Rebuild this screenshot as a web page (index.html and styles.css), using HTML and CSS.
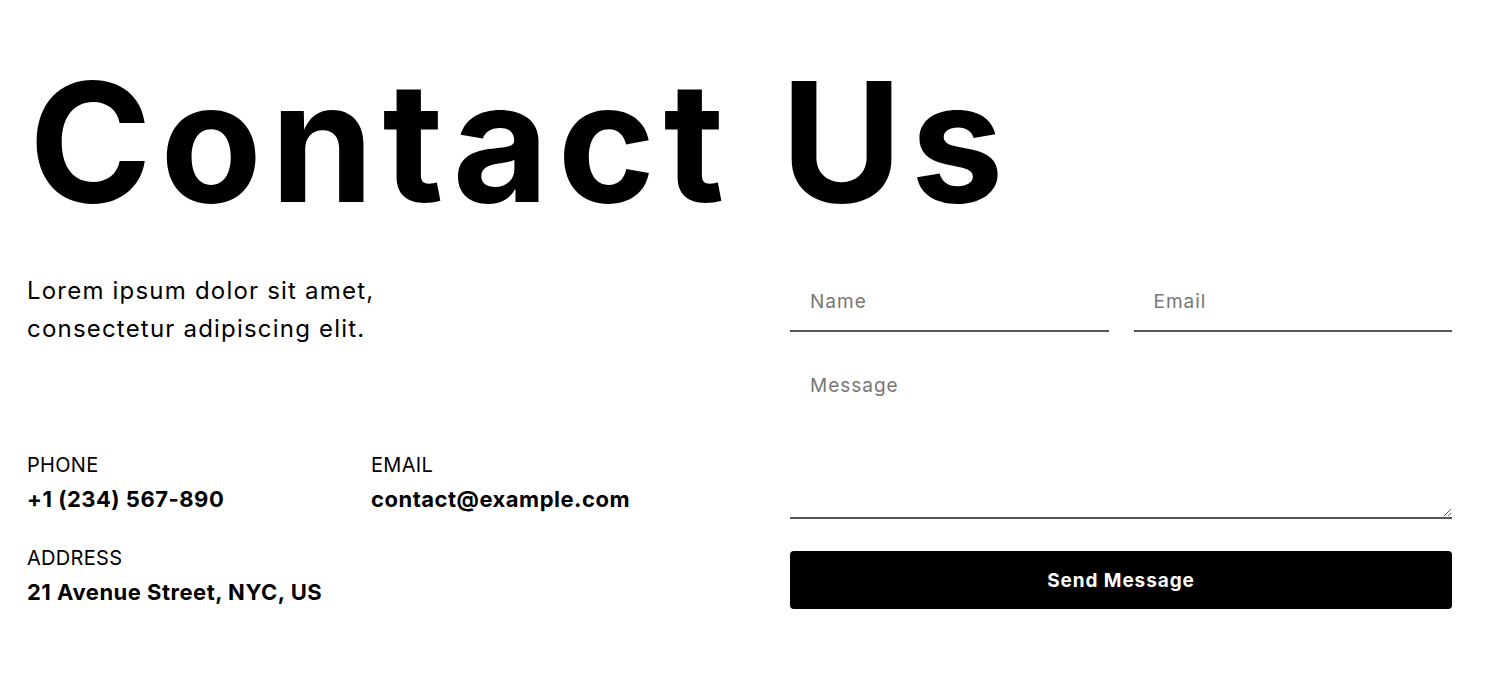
FILE: index.html
```html
<!DOCTYPE html>
<html lang="en">
<head>
<meta charset="utf-8">
<title>Contact Us</title>
<link rel="stylesheet" href="styles.css">
</head>
<body>
<main class="page">
  <h1 class="title">Contact Us</h1>
  <div class="grid">
    <section class="info">
      <p class="lead">Lorem ipsum dolor sit amet,<br>consectetur adipiscing elit.</p>
      <div class="details">
        <div class="item">
          <div class="label">PHONE</div>
          <div class="value">+1 (234) 567-890</div>
        </div>
        <div class="item">
          <div class="label">EMAIL</div>
          <div class="value">contact@example.com</div>
        </div>
        <div class="item">
          <div class="label">ADDRESS</div>
          <div class="value">21 Avenue Street, NYC, US</div>
        </div>
      </div>
    </section>
    <form class="form">
      <div class="row">
        <input class="field" type="text" placeholder="Name">
        <input class="field" type="email" placeholder="Email">
      </div>
      <textarea class="field area" placeholder="Message"></textarea>
      <button class="send" type="button">Send Message</button>
    </form>
  </div>
</main>
</body>
</html>
```

FILE: styles.css
```css
* { box-sizing: border-box; }
html, body { margin: 0; padding: 0; background: #fff; }
body {
  font-family: "Inter", "Open Sans", sans-serif;
  color: #000;
}
.page {
  padding: 59px 37px 0 27px;
}
.title {
  margin: 0;
  font-size: 166px;
  font-weight: 700;
  line-height: 1;
  letter-spacing: 8.5px;
  margin-left: 2px;
}
.grid {
  display: grid;
  grid-template-columns: 1fr 662px;
  column-gap: 30px;
  margin-top: 47px;
}
.lead {
  margin: 0;
  font-size: 24px;
  line-height: 38px;
  letter-spacing: 1.2px;
}
.details {
  display: grid;
  grid-template-columns: 344px 1fr;
  row-gap: 29px;
  margin-top: 103px;
}
.label {
  font-size: 20px;
  line-height: 28px;
  font-weight: 400;
  letter-spacing: 0.3px;
}
.value {
  margin-top: 4px;
  font-size: 22px;
  line-height: 32px;
  font-weight: 700;
  letter-spacing: 0.5px;
}
.form {
  display: flex;
  flex-direction: column;
}
.row {
  display: grid;
  grid-template-columns: 1fr 1fr;
  column-gap: 25px;
}
.field {
  font-family: inherit;
  font-size: 19px;
  letter-spacing: 1px;
  border: 0;
  border-bottom: 2px solid #555;
  padding: 14px 20px;
  background: transparent;
  outline: none;
  height: 60px;
  width: 100%;
  min-width: 0;
  color: #000;
}
.field::placeholder { color: #777; }
.area {
  margin-top: 30px;
  height: 157px;
  resize: vertical;
  padding-top: 12px;
}
.send {
  margin-top: 32px;
  height: 58px;
  border: 0;
  border-radius: 4px;
  background: #000;
  color: #fff;
  font-family: inherit;
  font-size: 19px;
  font-weight: 700;
  letter-spacing: 0.9px;
}
```
